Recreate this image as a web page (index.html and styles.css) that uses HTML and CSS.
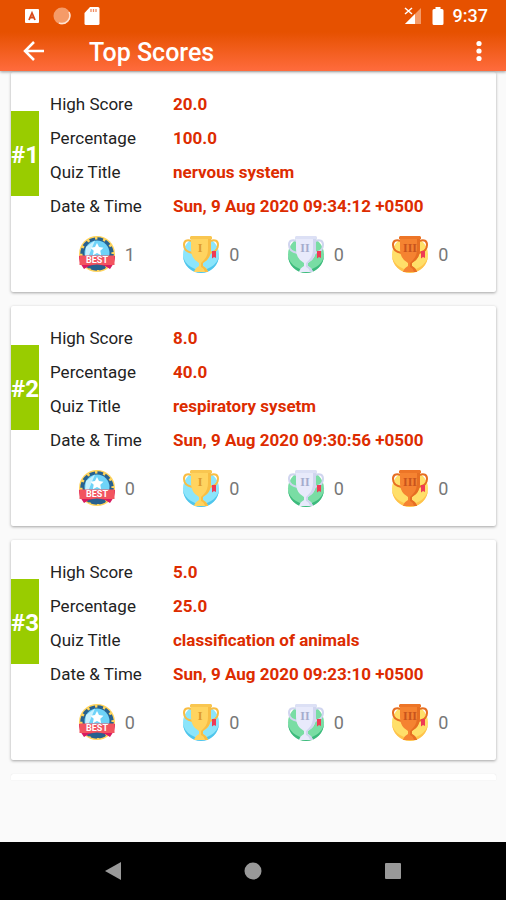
FILE: index.html
```html
<!DOCTYPE html>
<html lang="en">
<head>
<meta charset="utf-8">
<meta name="viewport" content="width=device-width, initial-scale=1">
<title>Top Scores</title>
<link rel="stylesheet" href="styles.css">
</head>
<body>
<svg class="sprite" aria-hidden="true">
  <symbol id="best" viewBox="0 0 38 38">
    <circle cx="19" cy="19" r="18" fill="#ffd45c"/>
    <circle cx="19" cy="19" r="14.500" fill="#28618f"/>
    <circle cx="19" cy="19" r="15" fill="none" stroke="#28618f" stroke-width="3.500" stroke-dasharray="5.500 2.350"/>
    <circle cx="19" cy="18" r="12.500" fill="#6fd3f8"/>
    <path d="M8 12 17 5.500l-7 17H7z" fill="#c6f1ff"/>
    <path d="m19 8 2 4 4.500.7-3.200 3.100.8 4.400-4.100-2.100-4.100 2.100.8-4.400-3.200-3.100 4.500-.7z" fill="#fff"/>
    <path d="M1 21h36q0 6-3 10l-2 3-5-3H11l-5 3-2-3Q1 27 1 21z" fill="#d81b60"/>
    <path d="M1.500 20.500h35v9.500h-35z" fill="#f2545f"/>
    <path d="M11 31q8-3 16 0l1 2-4 1-2 1h-6l-2-1-4-1z" fill="#28618f"/>
  </symbol>
  <symbol id="cup" viewBox="0 0 38 38">
    <circle class="disc" cx="19" cy="19.500" r="18"/>
    <path class="disc-shade" d="M1 20a18 18 0 0 0 36 0q-1 8-8 12l-4 2H13l-4-2q-7-4-8-12z"/>
    <path class="handle" d="M10 6Q2 3.500 2 10t8.500 8M28 6q8-2.500 8 4t-8.500 8"/>
    <path class="cup" d="M9 2h20v12q0 7-4 11l-4 3v3q4 2 5 6H12q1-4 5-6v-3l-4-3q-4-4-4-11z"/>
    <path class="cup-shade" d="M26 2h3v12q0 7-4 11l-4 3v3q4 2 5 6h-3q-1-4-4-5v-4l3-3q4-4 4-11z"/>
    <path class="rim" d="M9 1h20l1 1v2H8V2z"/>
    <path d="M30 16h4v7l-2-1-2 1.500z" fill="#ef3b55"/>
  </symbol>
</svg>

<header class="top">
  <div class="status">
    <svg class="glyph" viewBox="0 0 16 18"><rect x="1" y="2" width="14" height="14" rx="1" fill="#fff"/><path d="m5 13 3-7 3 7M6.500 10.500h3" fill="none" stroke="#d94a1b" stroke-width="1.800"/></svg>
    <svg class="glyph ball" viewBox="0 0 18 18"><circle cx="9" cy="9" r="8.500" fill="#f59b68"/><path d="M16 5a8 8 0 0 1-10 11" fill="none" stroke="#ffe3d2" stroke-width="1.500"/></svg>
    <svg class="glyph" viewBox="0 0 16 18"><path d="M6 0h8q1.500 0 1.500 1.500v15Q15.500 18 14 18H2Q.5 18 .5 16.500V6z" fill="#fff"/><path d="M7 2v3M9.500 2v3M12 2v3" stroke="#f08a60" stroke-width="1.300"/></svg>
    <span class="spacer"></span>
    <svg class="signal" viewBox="0 0 18 18"><path d="M17 1v16H1z" fill="#f59b68"/><path d="M11 7v10H1z" fill="#fff"/><path d="m1 1 7 6M8 1 1 7" stroke="#fff" stroke-width="1.500"/></svg>
    <svg class="battery" viewBox="0 0 12 18"><path d="M3.500 0h5v2H10q1.500 0 1.500 1.500v13Q11.500 18 10 18H2Q.5 18 .5 16.500v-13Q.5 2 2 2h1.500z" fill="#fff"/></svg>
    <time class="clock">9:37</time>
  </div>
  <div class="bar">
    <button class="icon-button" aria-label="Back"><svg width="22" height="22" viewBox="0 0 22 22"><path d="M21 11H3M11 2l-9 9 9 9" fill="none" stroke="#fff" stroke-width="2.500"/></svg></button>
    <h1 class="title">Top Scores</h1>
    <button class="icon-button" aria-label="More options"><svg width="6" height="22" viewBox="0 0 6 22"><g fill="#fff"><circle cx="3" cy="3.500" r="2.600"/><circle cx="3" cy="11" r="2.600"/><circle cx="3" cy="18.500" r="2.600"/></g></svg></button>
  </div>
</header>

<main class="scores">
  <article class="card">
    <h2 class="rank">#1</h2>
    <div class="body">
      <dl class="details">
        <dt>High Score</dt><dd>20.0</dd>
        <dt>Percentage</dt><dd>100.0</dd>
        <dt>Quiz Title</dt><dd>nervous system</dd>
        <dt>Date &amp; Time</dt><dd>Sun, 9 Aug 2020 09:34:12 +0500</dd>
      </dl>
      <ul class="awards">
        <li><svg class="award best" viewBox="0 0 38 38"><use href="#best"/><text x="19" y="28">BEST</text></svg>1</li>
        <li><svg class="award gold" viewBox="0 0 38 38"><use href="#cup"/><text x="18" y="17">I</text></svg>0</li>
        <li><svg class="award silver" viewBox="0 0 38 38"><use href="#cup"/><text x="18" y="17">II</text></svg>0</li>
        <li><svg class="award bronze" viewBox="0 0 38 38"><use href="#cup"/><text x="19" y="17">III</text></svg>0</li>
      </ul>
    </div>
  </article>
  <article class="card">
    <h2 class="rank">#2</h2>
    <div class="body">
      <dl class="details">
        <dt>High Score</dt><dd>8.0</dd>
        <dt>Percentage</dt><dd>40.0</dd>
        <dt>Quiz Title</dt><dd>respiratory sysetm</dd>
        <dt>Date &amp; Time</dt><dd>Sun, 9 Aug 2020 09:30:56 +0500</dd>
      </dl>
      <ul class="awards">
        <li><svg class="award best" viewBox="0 0 38 38"><use href="#best"/><text x="19" y="28">BEST</text></svg>0</li>
        <li><svg class="award gold" viewBox="0 0 38 38"><use href="#cup"/><text x="18" y="17">I</text></svg>0</li>
        <li><svg class="award silver" viewBox="0 0 38 38"><use href="#cup"/><text x="18" y="17">II</text></svg>0</li>
        <li><svg class="award bronze" viewBox="0 0 38 38"><use href="#cup"/><text x="19" y="17">III</text></svg>0</li>
      </ul>
    </div>
  </article>
  <article class="card">
    <h2 class="rank">#3</h2>
    <div class="body">
      <dl class="details">
        <dt>High Score</dt><dd>5.0</dd>
        <dt>Percentage</dt><dd>25.0</dd>
        <dt>Quiz Title</dt><dd>classification of animals</dd>
        <dt>Date &amp; Time</dt><dd>Sun, 9 Aug 2020 09:23:10 +0500</dd>
      </dl>
      <ul class="awards">
        <li><svg class="award best" viewBox="0 0 38 38"><use href="#best"/><text x="19" y="28">BEST</text></svg>0</li>
        <li><svg class="award gold" viewBox="0 0 38 38"><use href="#cup"/><text x="18" y="17">I</text></svg>0</li>
        <li><svg class="award silver" viewBox="0 0 38 38"><use href="#cup"/><text x="18" y="17">II</text></svg>0</li>
        <li><svg class="award bronze" viewBox="0 0 38 38"><use href="#cup"/><text x="19" y="17">III</text></svg>0</li>
      </ul>
    </div>
  </article>
  <div class="card next"></div>
</main>

<nav class="system-nav" aria-label="System">
  <button aria-label="Back"><svg width="18" height="18" viewBox="0 0 18 18"><path d="M1 9 17 0v18z" fill="#999"/></svg></button>
  <button aria-label="Home"><svg width="18" height="18" viewBox="0 0 18 18"><circle cx="9" cy="9" r="8.500" fill="#999"/></svg></button>
  <button aria-label="Recent apps"><svg width="18" height="18" viewBox="0 0 18 18"><rect x="1" y="1" width="16" height="16" rx="1" fill="#999"/></svg></button>
</nav>
</body>
</html>
```
FILE: styles.css
```css
* {
  box-sizing: border-box;
}

body {
  margin: 0;
  min-height: 100vh;
  display: flex;
  flex-direction: column;
  background: #fafafa;
  color: #222;
  font-family: Roboto, sans-serif;
  font-size: 17px;
}

h1, h2, dl, dd, ul {
  margin: 0;
  padding: 0;
}

button {
  display: flex;
  align-items: center;
  justify-content: center;
  padding: 0;
  border: 0;
  background: none;
}

.sprite {
  position: absolute;
  width: 0;
  height: 0;
}

.top {
  position: relative;
  z-index: 1;
  background: linear-gradient(#e65100 45%, #ff6b3d);
  box-shadow: 0 1px 3px rgba(0, 0, 0, 0.4);
  color: #fff;
}

.status {
  display: flex;
  align-items: center;
  height: 31px;
  padding: 0 18px 0 24px;
}

.glyph {
  width: 16px;
  height: 18px;
}

.ball {
  width: 18px;
  margin: 0 13px;
}

.spacer {
  flex: 1;
}

.signal {
  width: 18px;
  height: 18px;
}

.battery {
  width: 12px;
  height: 18px;
  margin: 0 9px 0 10px;
}

.clock {
  font-size: 18px;
  font-weight: 500;
}

.bar {
  display: flex;
  align-items: center;
  height: 40px;
  padding: 0 16px 0 23px;
}

.icon-button {
  min-width: 22px;
  height: 40px;
}

.title {
  flex: 1;
  padding: 4px 0 0 44px;
  font-size: 25px;
  font-weight: 500;
  line-height: 36px;
}

.scores {
  flex: 1;
  display: flex;
  flex-direction: column;
  gap: 14px;
  padding: 1px 10px 0 11px;
}

.card {
  display: flex;
  background: #fff;
  border-radius: 2px;
  box-shadow: 0 1px 3px rgba(0, 0, 0, 0.35);
}

.rank {
  width: 28px;
  height: 85px;
  margin-top: 39px;
  background: #99cc00;
  color: #fff;
  font-size: 24px;
  font-weight: 700;
  line-height: 88px;
  text-align: center;
  white-space: nowrap;
}

.body {
  flex: 1;
  padding: 15px 24px 19px 11px;
}

.details {
  display: grid;
  grid-template-columns: 123px 1fr;
  line-height: 34px;
}

.details dd {
  color: #dd2c00;
  font-weight: 700;
}

.awards {
  display: grid;
  grid-template-columns: repeat(4, 1fr);
  margin-top: 12px;
  padding-left: 4px;
  list-style: none;
}

.awards li {
  display: flex;
  align-items: center;
  justify-content: center;
  gap: 9px;
  color: #777;
  font-size: 18px;
}

.award {
  width: 38px;
  height: 38px;
}

.award text {
  font: 700 12px "Liberation Serif", serif;
  text-anchor: middle;
  fill: var(--mark);
}

.best text {
  font: 700 9px Roboto, sans-serif;
  fill: #fff;
}

.gold {
  --disc: #8be5fb;
  --disc-shade: #4fc5ec;
  --cup: #ffd460;
  --cup-shade: #f9bd43;
  --rim: #f9c650;
  --mark: #e09b2d;
}

.silver {
  --disc: #79dda4;
  --disc-shade: #3cba7c;
  --cup: #e8eafb;
  --cup-shade: #d0d5ef;
  --rim: #dce0f5;
  --mark: #a5accd;
}

.bronze {
  --disc: #ffdf69;
  --disc-shade: #ffc34b;
  --cup: #f58331;
  --cup-shade: #e66e22;
  --rim: #ed7527;
  --mark: #c9541d;
}

.disc {
  fill: var(--disc);
}

.disc-shade {
  fill: var(--disc-shade);
}

.handle {
  fill: none;
  stroke: var(--cup-shade);
  stroke-width: 2;
}

.cup {
  fill: var(--cup);
}

.cup-shade {
  fill: var(--cup-shade);
}

.rim {
  fill: var(--rim);
}

.next {
  height: 6px;
  border-radius: 2px 2px 0 0;
  box-shadow: 0 0 1px rgba(0, 0, 0, 0.15);
}

.system-nav {
  display: flex;
  justify-content: space-between;
  align-items: center;
  height: 58px;
  padding: 0 84px;
  background: #000;
}

.system-nav button {
  width: 58px;
  height: 58px;
}
```
